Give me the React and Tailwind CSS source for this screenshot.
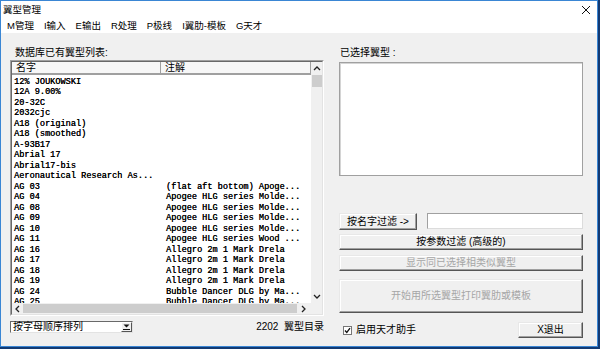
import React from 'react'

const ui = "font-['Liberation_Sans','Noto_Sans_CJK_SC',sans-serif]"

const rows = [
    ['12% JOUKOWSKI', ''],
    ['12A 9.00%', ''],
    ['20-32C', ''],
    ['2032cjc', ''],
    ['A18 (original)', ''],
    ['A18 (smoothed)', ''],
    ['A-93B17', ''],
    ['Abrial 17', ''],
    ['Abrial17-bis', ''],
    ['Aeronautical Research As...', ''],
    ['AG 03', '(flat aft bottom) Apoge...'],
    ['AG 04', 'Apogee HLG series Molde...'],
    ['AG 08', 'Apogee HLG series Molde...'],
    ['AG 09', 'Apogee HLG series Molde...'],
    ['AG 10', 'Apogee HLG series Molde...'],
    ['AG 11', 'Apogee HLG series Wood ...'],
    ['AG 16', 'Allegro 2m 1 Mark Drela'],
    ['AG 17', 'Allegro 2m 1 Mark Drela'],
    ['AG 18', 'Allegro 2m 1 Mark Drela'],
    ['AG 19', 'Allegro 2m 1 Mark Drela'],
    ['AG 24', 'Bubble Dancer DLG by Ma...'],
    ['AG 25', 'Bubble Dancer DLG by Ma...'],
]

const menus = ['M管理', 'I输入', 'E输出', 'R处理', 'P极线', 'I翼肋-模板', 'G天才']

const Chevron = ({ dir }) => {
    const pts = {
        up: '1,5 4,2 7,5',
        down: '1,2 4,5 7,2',
        left: '5,1 2,4 5,7',
        right: '2,1 5,4 2,7',
    }
    return (
        <svg width="8" height="8" viewBox="0 0 8 8">
            <polyline points={pts[dir]} fill="none" stroke="#222" strokeWidth="1.3" />
        </svg>
    )
}

const Btn = ({ className = '', disabled, children }) => (
    <div className={`flex items-center justify-center bg-[#f0f0f0] border border-t-[#e8e8e8] border-l-[#e8e8e8] border-r-[#555] border-b-[#555] shadow-[inset_-1px_-1px_0_#a0a0a0,inset_1px_1px_0_#fff] text-[10px] leading-none ${disabled ? 'text-[#a6a6a6]' : 'text-black'} ${className}`}>
        {children}
    </div>
)

const App = () => {
    return (
        <div className={`w-[600px] h-[349px] bg-[#123a73] overflow-hidden ${ui}`}>
            <div className="w-[598px] h-[347px] border border-[#3a86d4] bg-[#f0f0f0] flex flex-col">
                {/* title */}
                <div className="h-[17px] bg-white flex items-center justify-between pl-[2px] pr-[6px]">
                    <span className="text-[9.5px] leading-none text-black">翼型管理</span>
                    <svg width="10" height="10" viewBox="0 0 10 10">
                        <path d="M1 1 L9 9 M9 1 L1 9" stroke="#111" strokeWidth="1" />
                    </svg>
                </div>
                {/* menu */}
                <div className="h-[15px] bg-white flex items-center gap-[10px] pl-[6px] text-[9.5px] leading-none text-black">
                    {menus.map(m => (
                        <span key={m}>{m}</span>
                    ))}
                </div>

                <div className="flex-1 flex pt-[14px] pl-[9px]">
                    {/* left */}
                    <div className="w-[314px] flex flex-col">
                        <div className="h-[12px] mb-[1px] pl-[5px] flex items-center text-[10px] leading-none text-black">数据库已有翼型列表:</div>
                        <div className="h-[256px] border border-t-[#a0a0a0] border-l-[#a0a0a0] border-r-white border-b-white">
                            <div className="h-full border border-t-[#696969] border-l-[#696969] border-r-[#e3e3e3] border-b-[#e3e3e3] bg-white flex">
                                <div className="w-[299px] flex flex-col">
                                    <div className="h-[13px] flex bg-[#f7f7f7] border-b-2 border-b-[#a0a0a0] text-[10px] leading-none text-black">
                                        <div className="w-[149px] pl-[4px] flex items-center border-r border-r-[#a0a0a0]">名字</div>
                                        <div className="flex-1 pl-[4px] flex items-center border-r border-r-[#a0a0a0]">注解</div>
                                    </div>
                                    <div className="flex-1 overflow-hidden pt-[1.5px] font-['Liberation_Mono',monospace] text-[8.6px] leading-[10.5px] text-black [text-shadow:0.2px_0_0_#000]">
                                        {rows.map(([name, note], i) => (
                                            <div key={i} className="h-[10.5px] flex whitespace-nowrap">
                                                <div className="w-[154px] pl-[2px] overflow-hidden">{name}</div>
                                                <div>{note}</div>
                                            </div>
                                        ))}
                                    </div>
                                    <div className="h-[11px] flex items-center bg-[#f0f0f0]">
                                        <div className="w-[11px] flex justify-center"><Chevron dir="left" /></div>
                                        <div className="flex-1 h-[9px] bg-[#cdcdcd]" />
                                        <div className="w-[14px] flex justify-center"><Chevron dir="right" /></div>
                                    </div>
                                </div>
                                <div className="w-[11px] flex flex-col bg-[#f0f0f0]">
                                    <div className="h-[13px] flex items-center justify-center"><Chevron dir="up" /></div>
                                    <div className="h-[12px] ml-[1px] bg-[#cdcdcd]" />
                                    <div className="flex-1" />
                                    <div className="h-[13px] flex items-center justify-center"><Chevron dir="down" /></div>
                                    <div className="h-[11px]" />
                                </div>
                            </div>
                        </div>
                        <div className="mt-[5px] flex items-center justify-between">
                            <div className="w-[123px] h-[12px] flex border border-t-[#696969] border-l-[#696969] border-r-[#e3e3e3] border-b-[#e3e3e3] bg-white">
                                <div className="flex-1 pl-[2px] flex items-center text-[10px] leading-none text-black">按字母顺序排列</div>
                                <div className="w-[11px] flex items-end justify-center pb-[1px] bg-[#f0f0f0] border border-t-white border-l-white border-r-[#555] border-b-[#555]">
                                    <svg width="7" height="6" viewBox="0 0 7 6">
                                        <path d="M0.5 0.5 L6.5 0.5 L3.5 3.5 Z" fill="#111" />
                                        <path d="M0 5.5 H7" stroke="#111" strokeWidth="1" />
                                    </svg>
                                </div>
                            </div>
                            <div className="text-[10px] leading-none text-black">2202&nbsp; 翼型目录</div>
                        </div>
                    </div>

                    {/* right */}
                    <div className="w-[244px] ml-[15px] flex flex-col">
                        <div className="h-[12px] pl-[1px] flex items-center text-[10px] leading-none text-black">已选择翼型 :</div>
                        <div className="mt-[3px] h-[114px] bg-white border border-[#a0a0a0] shadow-[inset_1px_1px_0_#d4d4d4]" />
                        <div className="mt-[37px] h-[17px] flex gap-[10px]">
                            <Btn className="w-[78px]">按名字过滤 -&gt;</Btn>
                            <div className="flex-1 h-[16px] bg-white border border-t-[#a0a0a0] border-l-[#a0a0a0] border-r-[#dcdcdc] border-b-[#dcdcdc]" />
                        </div>
                        <Btn className="mt-[4px] h-[16px]">按参数过滤 (高级的)</Btn>
                        <Btn className="mt-[5px] h-[16px]" disabled>显示同已选择相类似翼型</Btn>
                        <Btn className="mt-[8px] h-[34px]" disabled>开始用所选翼型打印翼肋或模板</Btn>
                        <div className="mt-[9px] h-[16px] flex items-center justify-between">
                            <div className="flex items-center gap-[4px] pl-[4px]">
                                <div className="w-[9px] h-[9px] bg-white border border-[#777] flex items-center justify-center">
                                    <svg width="7" height="7" viewBox="0 0 7 7">
                                        <polyline points="1,3.5 2.8,5.5 6,1.2" fill="none" stroke="#111" strokeWidth="1.3" />
                                    </svg>
                                </div>
                                <span className="text-[10px] leading-none text-black">启用天才助手</span>
                            </div>
                            <Btn className="w-[65px] h-[16px]">X退出</Btn>
                        </div>
                    </div>
                </div>
            </div>
        </div>
    )
}

export default App
